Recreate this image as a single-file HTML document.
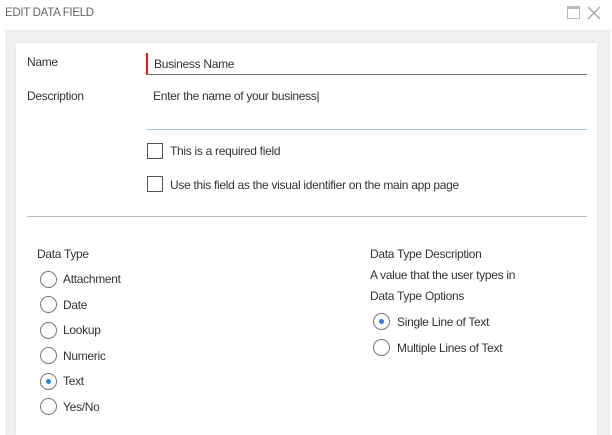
<!DOCTYPE html><html><head><style>
body{margin:0;width:612px;height:435px;background:#fff;font-family:"Liberation Sans",Arial,sans-serif;font-size:12px;color:#333;position:relative;overflow:hidden}
.a{position:absolute;white-space:nowrap;letter-spacing:-0.3px}
.r{position:absolute;width:17px;height:17px;border:1px solid #777;border-radius:50%;box-sizing:border-box;background:#fff}
.r.on::after{content:"";position:absolute;left:5px;top:5px;width:5px;height:5px;border-radius:50%;background:#2a7de1}
.cb{position:absolute;width:16px;height:16px;border:1px solid #555;box-sizing:border-box}
</style></head><body>
<div class="a" style="left:5px;top:7px;color:#666;font-size:11.5px">EDIT DATA FIELD</div>
<div style="position:absolute;left:567px;top:6px;width:13px;height:13px;border:1px solid #bbb;border-top:3px solid #bbb;box-sizing:border-box"></div>
<svg style="position:absolute;left:587px;top:6px" width="14" height="14"><path d="M1 1L13 13M13 1L1 13" stroke="#aaa" stroke-width="1.5"/></svg>
<div style="position:absolute;left:5px;top:30px;width:605px;height:405px;background:#f0f0f0"></div>
<div style="position:absolute;left:16px;top:43px;width:581px;height:392px;background:#fff;box-shadow:0 0 2px #ddd"></div>
<div class="a" style="left:27px;top:55px">Name</div>
<div style="position:absolute;left:146px;top:53px;width:2px;height:22px;background:#e02020"></div>
<div style="position:absolute;left:147px;top:74px;width:440px;height:1px;background:#777"></div>
<div class="a" style="left:154px;top:57px">Business Name</div>
<div class="a" style="left:27px;top:89px">Description</div>
<div class="a" style="left:153px;top:89px">Enter the name of your business|</div>
<div style="position:absolute;left:147px;top:129px;width:440px;height:1px;background:#9bbfe8"></div>
<div class="cb" style="left:147px;top:143px"></div>
<div class="a" style="left:170px;top:144px">This is a required field</div>
<div class="cb" style="left:147px;top:176px"></div>
<div class="a" style="left:170px;top:178px">Use this field as the visual identifier on the main app page</div>
<div style="position:absolute;left:27px;top:216px;width:560px;height:1px;background:#bbb"></div>
<div class="a" style="left:37px;top:247px">Data Type</div>
<div class="r" style="left:40px;top:271px"></div><div class="a" style="left:63px;top:272px">Attachment</div>
<div class="r" style="left:40px;top:296px"></div><div class="a" style="left:63px;top:298px">Date</div>
<div class="r" style="left:40px;top:322px"></div><div class="a" style="left:63px;top:323px">Lookup</div>
<div class="r" style="left:40px;top:347px"></div><div class="a" style="left:63px;top:349px">Numeric</div>
<div class="r on" style="left:40px;top:373px"></div><div class="a" style="left:63px;top:374px">Text</div>
<div class="r" style="left:40px;top:398px"></div><div class="a" style="left:63px;top:400px">Yes/No</div>
<div class="a" style="left:370px;top:247px">Data Type Description</div>
<div class="a" style="left:370px;top:268px">A value that the user types in</div>
<div class="a" style="left:370px;top:289px">Data Type Options</div>
<div class="r on" style="left:373px;top:313px"></div><div class="a" style="left:397px;top:315px">Single Line of Text</div>
<div class="r" style="left:373px;top:339px"></div><div class="a" style="left:397px;top:341px">Multiple Lines of Text</div>
</body></html>
